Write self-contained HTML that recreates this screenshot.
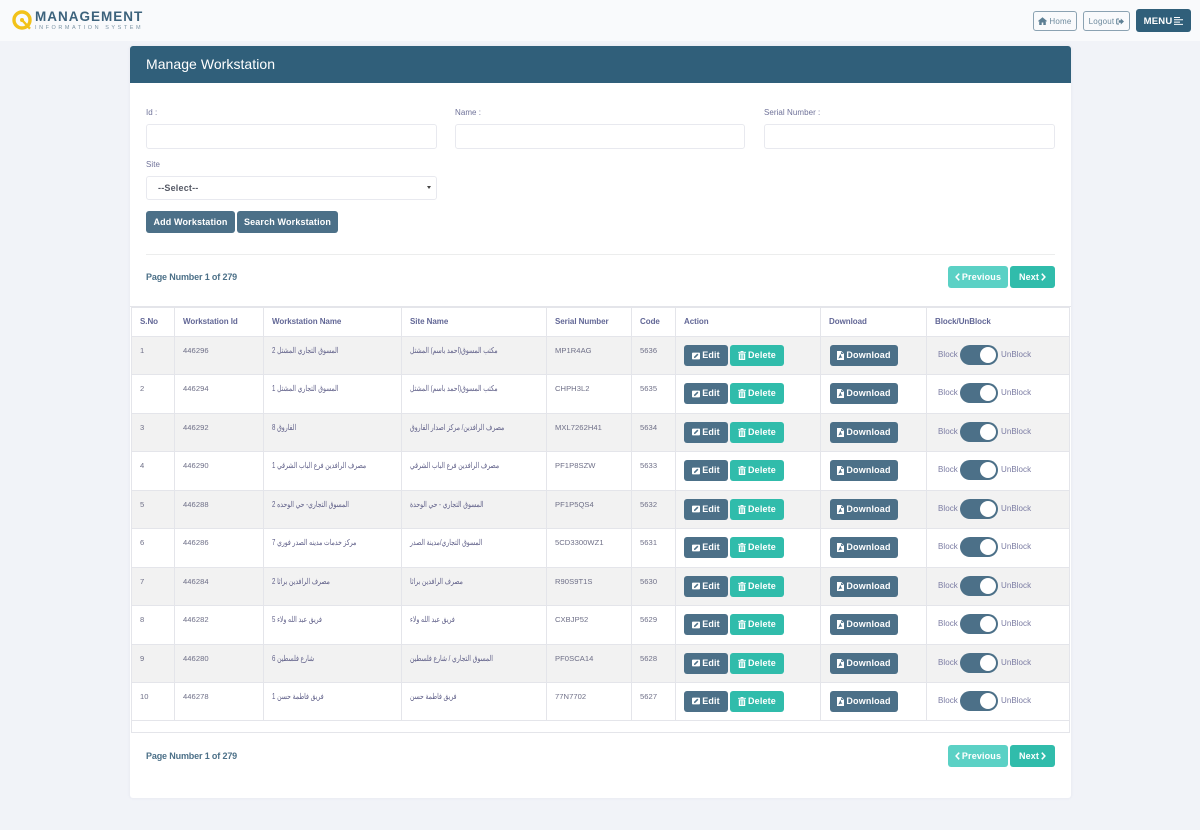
<!DOCTYPE html>
<html lang="en">
<head>
<meta charset="utf-8">
<title>Manage Workstation</title>
<style>
*{box-sizing:border-box}
html,body{margin:0;padding:0}
body{width:1200px;height:830px;overflow:hidden;position:relative;background:#f1f3f8;font-family:"Liberation Sans","Noto Sans CJK SC",sans-serif;color:#6f6f95;font-size:8px}
.abs{position:absolute}
#top{left:0;top:0;width:1200px;height:41px;background:#f9fafc}
#card{left:130px;top:46px;width:941px;height:752px;background:#fff;border-radius:3px;box-shadow:0 0 3px rgba(60,70,110,.08)}
#head{left:130px;top:46px;width:941px;height:37px;background:#305f7a;border-radius:3px 3px 0 0;color:#fff;font-size:14px;line-height:37px;padding-left:16px;letter-spacing:.05px}
.lbl{font-size:8px;color:#6f7299;line-height:10px;letter-spacing:.05px}
.inp{height:25px;background:#fff;border:1px solid #e8e9ef;border-radius:3px}
.b{position:absolute;display:flex;align-items:center;justify-content:center;gap:2px;border-radius:3px;color:#fff;font-weight:700;font-size:9px;letter-spacing:.15px;white-space:nowrap}
.blue{background:#4c7088}.teal{background:#30bcab}.lite{background:#5bd1c5}
.pn{font-size:9px;font-weight:700;color:#4c7088;line-height:12px;letter-spacing:-.15px}
table{position:absolute;left:131px;top:307px;width:938px;border-collapse:collapse;table-layout:fixed}
th,td{border:1px solid #e4e5ea;padding:0 0 0 8px;text-align:left;vertical-align:top;overflow:hidden;white-space:nowrap}
th{height:28px;line-height:28px;font-size:8px;font-weight:700;color:#626796;letter-spacing:-.05px}
td{height:38.45px;line-height:9px;padding-top:9px;font-size:7.6px;color:#6f7088;letter-spacing:.05px}
tbody tr:nth-child(odd) td{background:#f2f2f2}
td .ar{display:inline-block;transform:scaleX(.76);transform-origin:0 50%;font-size:8px;color:#5f5f88;letter-spacing:0}
.act{position:relative;padding:0}
.act .b{height:21px;top:8px}
.tog{position:absolute;left:33px;top:8px;width:38px;height:20px;border-radius:10px;background:#4c7088}
.tog:after{content:"";position:absolute;right:2px;top:2px;width:16px;height:16px;border-radius:50%;background:#fff}
.t1,.t2{position:absolute;top:13px;font-size:8px;line-height:9px;color:#7b7ca3;letter-spacing:.05px}
.t1{left:11px}.t2{left:74px}
svg{display:block;flex:none}
</style>
</head>
<body>
<svg width="0" height="0" style="position:absolute">
<symbol id="ie" viewBox="0 0 10 10" preserveAspectRatio="none"><path fill="#fff" d="M1 .8h8A1 1 0 0 1 10 1.800v6.400a1 1 0 0 1-1 1H1a1 1 0 0 1-1-1V1.800a1 1 0 0 1 1-1z"/><path fill="#4c7088" d="M2.400 7.600l.4-1.800L6.600 2l1.400 1.400-3.800 3.800z"/></symbol>
<symbol id="id" viewBox="0 0 10 10" preserveAspectRatio="none"><path fill="#fff" d="M3.500 0h3l.5 1h3v1H0V1h3zM1 2.600h8V10H1z"/><path fill="#30bcab" d="M2.800 3.800h.8v5h-.8zM4.600 3.800h.8v5h-.8zM6.400 3.800h.8v5h-.8z"/></symbol>
<symbol id="if" viewBox="0 0 10 10" preserveAspectRatio="none"><path fill="#fff" d="M0 0h6.300L10 3v7H0z"/><path fill="#4c7088" d="M5.900.6v2.800h3.400zM4.300 3.800h1c.2 1.500.6 2.300 2 3v.7c-1.800-.2-3 0-4.700.9l-.5-.5c1.100-1.300 1.800-2.500 2.200-4.100z"/></symbol>
<symbol id="cl" viewBox="0 0 5 8"><path fill="none" stroke="#fff" stroke-width="1.500" d="M4.200.7L1.100 4l3.100 3.300"/></symbol>
<symbol id="cr" viewBox="0 0 5 8"><path fill="none" stroke="#fff" stroke-width="1.500" d="M.8.7L3.900 4 .8 7.300"/></symbol>
</svg>

<div class="abs" id="top"></div>

<svg class="abs" style="left:12px;top:10px" width="22" height="22" viewBox="0 0 22 22">
<circle cx="10" cy="10" r="8" fill="none" stroke="#f2c21a" stroke-width="3.400"/>
<circle cx="10" cy="10" r="2" fill="#f2c21a"/>
<path d="M10.500 10.500L18 18.700" stroke="#f2c21a" stroke-width="2.400"/>
</svg>
<div class="abs" style="left:35px;top:9px;font-size:13.500px;line-height:15px;font-weight:700;color:#3c627c;letter-spacing:1px;white-space:nowrap">MANAGEMENT</div>
<div class="abs" style="left:35px;top:24.500px;font-size:5.500px;line-height:7px;color:#7d95a6;letter-spacing:2.550px;white-space:nowrap">INFORMATION SYSTEM</div>

<div class="abs" style="left:1033px;top:11px;width:44px;height:20px;border:1px solid #8ba2b2;border-radius:3px;display:flex;align-items:center;justify-content:center;gap:2px;color:#6d8a9d;font-size:8px;letter-spacing:.2px">
<svg width="9" height="8" viewBox="0 0 9 8"><path fill="#5d7f94" d="M4.500.3L9 4l-.5.600-.7-.6v4H5.300V5.500H3.700V8H1.200V4l-.7.600L0 4z"/></svg>Home</div>
<div class="abs" style="left:1083px;top:11px;width:47px;height:20px;border:1px solid #8ba2b2;border-radius:3px;display:flex;align-items:center;justify-content:center;gap:2px;color:#6d8a9d;font-size:8px;letter-spacing:.2px">Logout
<svg width="8" height="7" viewBox="0 0 8 7"><path fill="#5d7f94" d="M3 .5H1.200A1 1 0 0 0 .2 1.500v4a1 1 0 0 0 1 1H3v-1H1.200v-4H3zM4.800.5L8 3.500 4.800 6.500V4.700H2.700V2.300h2.100z"/></svg></div>
<div class="abs" style="left:1136px;top:9px;width:55px;height:23px;background:#305f7a;border-radius:3px;display:flex;align-items:center;justify-content:center;gap:2px;color:#fff;font-weight:700;font-size:9.500px;letter-spacing:.2px;padding-top:1px">MENU
<svg width="9" height="8" viewBox="0 0 9 8"><path fill="#fff" d="M0 0h6v1H0zM0 2.300h9v1H0zM0 4.600h6v1H0zM0 6.900h9v1H0z"/></svg></div>

<div class="abs" id="card"></div>
<div class="abs" id="head">Manage Workstation</div>

<div class="abs lbl" style="left:146px;top:108px">Id :</div>
<div class="abs lbl" style="left:455px;top:108px">Name :</div>
<div class="abs lbl" style="left:764px;top:108px">Serial Number :</div>
<div class="abs inp" style="left:146px;top:124px;width:291px"></div>
<div class="abs inp" style="left:455px;top:124px;width:290px"></div>
<div class="abs inp" style="left:764px;top:124px;width:291px"></div>
<div class="abs lbl" style="left:146px;top:160px">Site</div>
<div class="abs inp" style="left:146px;top:176px;width:291px;height:24px;font-weight:700;font-size:9px;line-height:22px;padding-left:11px;color:#565a66;letter-spacing:.2px">--Select--</div>
<div class="abs" style="left:427px;top:186px;width:0;height:0;border-left:2.500px solid transparent;border-right:2.500px solid transparent;border-top:3px solid #444"></div>

<div class="b blue" style="left:146px;top:211px;width:89px;height:22px">Add Workstation</div>
<div class="b blue" style="left:237px;top:211px;width:101px;height:22px">Search Workstation</div>

<div class="abs" style="left:146px;top:254px;width:909px;height:1px;background:#eceded"></div>
<div class="abs pn" style="left:146px;top:271px">Page Number 1 of 279</div>
<div class="b lite" style="left:948px;top:266px;width:60px;height:22px"><svg width="5" height="8"><use href="#cl"/></svg>Previous</div>
<div class="b teal" style="left:1010px;top:266px;width:45px;height:22px">Next<svg width="5" height="8"><use href="#cr"/></svg></div>

<div class="abs" style="left:130px;top:306px;width:941px;height:1px;background:#e4e5ea"></div>
<div class="abs" style="left:131px;top:721px;width:939px;height:12px;border-left:1px solid #e4e5ea;border-right:1px solid #e4e5ea;border-bottom:1px solid #e4e5ea"></div>

<table>
<colgroup><col style="width:43px"><col style="width:89px"><col style="width:138px"><col style="width:145px"><col style="width:85px"><col style="width:44px"><col style="width:145px"><col style="width:106px"><col style="width:143px"></colgroup>
<thead><tr><th>S.No</th><th>Workstation Id</th><th>Workstation Name</th><th>Site Name</th><th>Serial Number</th><th>Code</th><th>Action</th><th>Download</th><th>Block/UnBlock</th></tr></thead>
<tbody>
<tr><td>1</td><td>446296</td><td><span class="ar">المسوق التجاري المشتل 2</span></td><td><span class="ar">مكتب المسوق(احمد باسم) المشتل</span></td><td>MP1R4AG</td><td>5636</td><td class="act"><div class="b blue" style="left:8px;width:44px"><svg width="8" height="8"><use href="#ie"/></svg>Edit</div><div class="b teal" style="left:54px;width:54px"><svg width="8" height="9"><use href="#id"/></svg>Delete</div></td><td class="act"><div class="b blue" style="left:9px;width:68px"><svg width="7" height="9"><use href="#if"/></svg>Download</div></td><td class="act"><span class="t1">Block</span><span class="tog"></span><span class="t2">UnBlock</span></td></tr>
<tr><td>2</td><td>446294</td><td><span class="ar">المسوق التجاري المشتل 1</span></td><td><span class="ar">مكتب المسوق(احمد باسم) المشتل</span></td><td>CHPH3L2</td><td>5635</td><td class="act"><div class="b blue" style="left:8px;width:44px"><svg width="8" height="8"><use href="#ie"/></svg>Edit</div><div class="b teal" style="left:54px;width:54px"><svg width="8" height="9"><use href="#id"/></svg>Delete</div></td><td class="act"><div class="b blue" style="left:9px;width:68px"><svg width="7" height="9"><use href="#if"/></svg>Download</div></td><td class="act"><span class="t1">Block</span><span class="tog"></span><span class="t2">UnBlock</span></td></tr>
<tr><td>3</td><td>446292</td><td><span class="ar">الفاروق 8</span></td><td><span class="ar">مصرف الرافدين/ مركز اصدار الفاروق</span></td><td>MXL7262H41</td><td>5634</td><td class="act"><div class="b blue" style="left:8px;width:44px"><svg width="8" height="8"><use href="#ie"/></svg>Edit</div><div class="b teal" style="left:54px;width:54px"><svg width="8" height="9"><use href="#id"/></svg>Delete</div></td><td class="act"><div class="b blue" style="left:9px;width:68px"><svg width="7" height="9"><use href="#if"/></svg>Download</div></td><td class="act"><span class="t1">Block</span><span class="tog"></span><span class="t2">UnBlock</span></td></tr>
<tr><td>4</td><td>446290</td><td><span class="ar">مصرف الرافدين فرع الباب الشرقي 1</span></td><td><span class="ar">مصرف الرافدين فرع الباب الشرقي</span></td><td>PF1P8SZW</td><td>5633</td><td class="act"><div class="b blue" style="left:8px;width:44px"><svg width="8" height="8"><use href="#ie"/></svg>Edit</div><div class="b teal" style="left:54px;width:54px"><svg width="8" height="9"><use href="#id"/></svg>Delete</div></td><td class="act"><div class="b blue" style="left:9px;width:68px"><svg width="7" height="9"><use href="#if"/></svg>Download</div></td><td class="act"><span class="t1">Block</span><span class="tog"></span><span class="t2">UnBlock</span></td></tr>
<tr><td>5</td><td>446288</td><td><span class="ar">المسوق التجاري- حي الوحده 2</span></td><td><span class="ar">المسوق التجاري - حي الوحدة</span></td><td>PF1P5QS4</td><td>5632</td><td class="act"><div class="b blue" style="left:8px;width:44px"><svg width="8" height="8"><use href="#ie"/></svg>Edit</div><div class="b teal" style="left:54px;width:54px"><svg width="8" height="9"><use href="#id"/></svg>Delete</div></td><td class="act"><div class="b blue" style="left:9px;width:68px"><svg width="7" height="9"><use href="#if"/></svg>Download</div></td><td class="act"><span class="t1">Block</span><span class="tog"></span><span class="t2">UnBlock</span></td></tr>
<tr><td>6</td><td>446286</td><td><span class="ar">مركز خدمات مدينه الصدر فوري 7</span></td><td><span class="ar">المسوق التجاري/مدينة الصدر</span></td><td>5CD3300WZ1</td><td>5631</td><td class="act"><div class="b blue" style="left:8px;width:44px"><svg width="8" height="8"><use href="#ie"/></svg>Edit</div><div class="b teal" style="left:54px;width:54px"><svg width="8" height="9"><use href="#id"/></svg>Delete</div></td><td class="act"><div class="b blue" style="left:9px;width:68px"><svg width="7" height="9"><use href="#if"/></svg>Download</div></td><td class="act"><span class="t1">Block</span><span class="tog"></span><span class="t2">UnBlock</span></td></tr>
<tr><td>7</td><td>446284</td><td><span class="ar">مصرف الرافدين براثا 2</span></td><td><span class="ar">مصرف الرافدين براثا</span></td><td>R90S9T1S</td><td>5630</td><td class="act"><div class="b blue" style="left:8px;width:44px"><svg width="8" height="8"><use href="#ie"/></svg>Edit</div><div class="b teal" style="left:54px;width:54px"><svg width="8" height="9"><use href="#id"/></svg>Delete</div></td><td class="act"><div class="b blue" style="left:9px;width:68px"><svg width="7" height="9"><use href="#if"/></svg>Download</div></td><td class="act"><span class="t1">Block</span><span class="tog"></span><span class="t2">UnBlock</span></td></tr>
<tr><td>8</td><td>446282</td><td><span class="ar">فريق عبد الله ولاء 5</span></td><td><span class="ar">فريق عبد الله ولاء</span></td><td>CXBJP52</td><td>5629</td><td class="act"><div class="b blue" style="left:8px;width:44px"><svg width="8" height="8"><use href="#ie"/></svg>Edit</div><div class="b teal" style="left:54px;width:54px"><svg width="8" height="9"><use href="#id"/></svg>Delete</div></td><td class="act"><div class="b blue" style="left:9px;width:68px"><svg width="7" height="9"><use href="#if"/></svg>Download</div></td><td class="act"><span class="t1">Block</span><span class="tog"></span><span class="t2">UnBlock</span></td></tr>
<tr><td>9</td><td>446280</td><td><span class="ar">شارع فلسطين 6</span></td><td><span class="ar">المسوق التجاري / شارع فلسطين</span></td><td>PF0SCA14</td><td>5628</td><td class="act"><div class="b blue" style="left:8px;width:44px"><svg width="8" height="8"><use href="#ie"/></svg>Edit</div><div class="b teal" style="left:54px;width:54px"><svg width="8" height="9"><use href="#id"/></svg>Delete</div></td><td class="act"><div class="b blue" style="left:9px;width:68px"><svg width="7" height="9"><use href="#if"/></svg>Download</div></td><td class="act"><span class="t1">Block</span><span class="tog"></span><span class="t2">UnBlock</span></td></tr>
<tr><td>10</td><td>446278</td><td><span class="ar">فريق فاطمة حسن 1</span></td><td><span class="ar">فريق فاطمة حسن</span></td><td>77N7702</td><td>5627</td><td class="act"><div class="b blue" style="left:8px;width:44px"><svg width="8" height="8"><use href="#ie"/></svg>Edit</div><div class="b teal" style="left:54px;width:54px"><svg width="8" height="9"><use href="#id"/></svg>Delete</div></td><td class="act"><div class="b blue" style="left:9px;width:68px"><svg width="7" height="9"><use href="#if"/></svg>Download</div></td><td class="act"><span class="t1">Block</span><span class="tog"></span><span class="t2">UnBlock</span></td></tr>
</tbody>
</table>

<div class="abs pn" style="left:146px;top:750px">Page Number 1 of 279</div>
<div class="b lite" style="left:948px;top:745px;width:60px;height:22px"><svg width="5" height="8"><use href="#cl"/></svg>Previous</div>
<div class="b teal" style="left:1010px;top:745px;width:45px;height:22px">Next<svg width="5" height="8"><use href="#cr"/></svg></div>
</body>
</html>
